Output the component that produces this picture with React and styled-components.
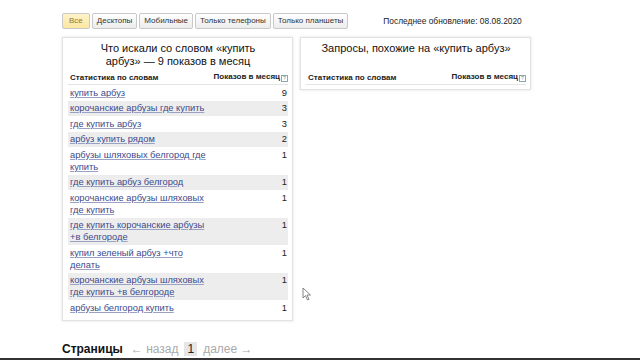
import styled, { createGlobalStyle } from "styled-components";

const GlobalStyle = createGlobalStyle`
  html, body {
    margin: 0;
    padding: 0;
    background: #fff;
    font-family: "Liberation Sans", Arial, sans-serif;
    color: #000;
  }
`;

const Page = styled.div`
  width: 640px;
  height: 360px;
  position: relative;
  overflow: hidden;
  display: flex;
  flex-direction: column;
`;

const Content = styled.div`
  flex: 1;
  padding: 13px 0 0 62px;
  display: flex;
  flex-direction: column;
`;

const TopBar = styled.div`
  display: flex;
  align-items: center;
  height: 16px;
`;

const Tabs = styled.div`
  display: flex;
  gap: 2px;
`;

const Tab = styled.div`
  height: 16px;
  box-sizing: border-box;
  padding: 0 ${(p) => p.$pad}px;
  border: 1px solid #c9c9c9;
  border-radius: 2px;
  background: ${(p) =>
    p.$active ? "linear-gradient(#fff3c8, #fbe7a3)" : "linear-gradient(#fff, #ececec)"};
  color: ${(p) => (p.$active ? "#8a7a3a" : "#333")};
  font-size: 8px;
  line-height: 14px;
  white-space: nowrap;
`;

const Updated = styled.div`
  margin-left: 35px;
  font-size: 8.4px;
  color: #222;
`;

const Panels = styled.div`
  display: flex;
  align-items: flex-start;
  gap: 7px;
  margin-top: 8px;
`;

const Panel = styled.div`
  width: 231px;
  box-sizing: border-box;
  border: 1px solid #e2e2e2;
  box-shadow: 0 0 3px rgba(0, 0, 0, 0.12);
  background: #fff;
  padding: 4px 4px 4px 5px;
`;

const PanelTitle = styled.div`
  text-align: center;
  font-size: 11px;
  line-height: 13px;
  padding: 0 ${(p) => p.$inset}px;
  min-height: 26px;
  color: #111;
`;

const Table = styled.div`
  display: flex;
  flex-direction: column;
  margin-top: 4px;
`;

const HeadRow = styled.div`
  display: flex;
  justify-content: space-between;
  align-items: center;
  font-size: 8px;
  font-weight: bold;
  color: #222;
  padding: 0 0 2px 2px;
  border-bottom: 1px solid #e4e4e4;
`;

const Hint = styled.span`
  display: inline-block;
  width: 5px;
  height: 5px;
  border: 1px solid #8aa;
  margin-left: 1px;
  vertical-align: -1px;
  font-size: 5px;
  line-height: 5px;
  text-align: center;
  color: #688;
  font-weight: normal;
`;

const Row = styled.div`
  display: flex;
  justify-content: space-between;
  align-items: flex-start;
  background: ${(p) => (p.$shade ? "#ededed" : "#fff")};
  padding: 1.75px 1px 1.75px 2px;
  font-size: 9.3px;
  line-height: 12px;
`;

const Phrase = styled.a`
  color: #3b4a8c;
  text-decoration: underline;
  text-decoration-color: #9aa2c4;
  max-width: 140px;
`;

const Count = styled.span`
  color: #222;
`;

const Pager = styled.div`
  display: flex;
  align-items: center;
  gap: 6px;
  margin-top: auto;
  margin-bottom: 2px;
  font-size: 12px;
  color: #aaa;
`;

const PagerLabel = styled.span`
  font-weight: bold;
  color: #111;
  margin-right: 2px;
`;

const Current = styled.span`
  background: #e6e6e6;
  color: #222;
  padding: 0 3px;
`;

const Taskbar = styled.div`
  height: 2px;
  background: #333;
`;

const Cursor = styled.svg`
  position: absolute;
  left: 302px;
  top: 287px;
`;

const tabs = [
  { label: "Все", pad: 6, active: true },
  { label: "Десктопы", pad: 4 },
  { label: "Мобильные", pad: 4 },
  { label: "Только телефоны", pad: 4 },
  { label: "Только планшеты", pad: 4 },
];

const rows = [
  ["купить арбуз", 9],
  ["корочанские арбузы где купить", 3],
  ["где купить арбуз", 3],
  ["арбуз купить рядом", 2],
  ["арбузы шляховых белгород где купить", 1],
  ["где купить арбуз белгород", 1],
  ["корочанские арбузы шляховых где купить", 1],
  ["где купить корочанские арбузы +в белгороде", 1],
  ["купил зеленый арбуз +что делать", 1],
  ["корочанские арбузы шляховых где купить +в белгороде", 1],
  ["арбузы белгород купить", 1],
];

function TableHead() {
  return (
    <HeadRow>
      <span>Статистика по словам</span>
      <span>
        Показов в месяц<Hint>?</Hint>
      </span>
    </HeadRow>
  );
}

export default function App() {
  return (
    <Page>
      <GlobalStyle />
      <Content>
        <TopBar>
          <Tabs>
            {tabs.map((t) => (
              <Tab key={t.label} $pad={t.pad} $active={t.active}>
                {t.label}
              </Tab>
            ))}
          </Tabs>
          <Updated>Последнее обновление: 08.08.2020</Updated>
        </TopBar>

        <Panels>
          <Panel>
            <PanelTitle $inset={22}>Что искали со словом «купить арбуз» — 9 показов в месяц</PanelTitle>
            <Table>
              <TableHead />
              {rows.map(([phrase, count], i) => (
                <Row key={phrase} $shade={i % 2 === 1}>
                  <Phrase href="#">{phrase}</Phrase>
                  <Count>{count}</Count>
                </Row>
              ))}
            </Table>
          </Panel>
          <Panel>
            <PanelTitle $inset={4}>Запросы, похожие на «купить арбуз»</PanelTitle>
            <Table>
              <TableHead />
            </Table>
          </Panel>
        </Panels>

        <Pager>
          <PagerLabel>Страницы</PagerLabel>
          <span>← назад</span>
          <Current>1</Current>
          <span>далее →</span>
        </Pager>
      </Content>
      <Taskbar />
      <Cursor width="10" height="14" viewBox="0 0 10 14">
        <path d="M1 1 L1 11 L3.5 8.6 L5.5 13 L7 12.3 L5 8 L8.5 8 Z" fill="#fff" stroke="#666" strokeWidth="0.8" />
      </Cursor>
    </Page>
  );
}
